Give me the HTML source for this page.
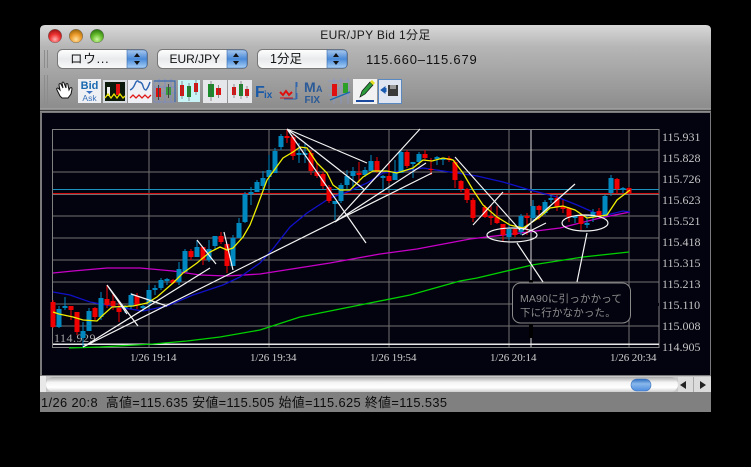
<!DOCTYPE html>
<html><head><meta charset="utf-8"><style>
html,body{margin:0;padding:0;background:#000;width:751px;height:467px;overflow:hidden}
svg{display:block}
text{font-family:"Liberation Sans","Noto Sans CJK JP",sans-serif}
.s{font-family:"Liberation Serif","Noto Serif CJK SC",serif;fill:#c4c4c4;font-size:12px}
.d{font-size:11px;letter-spacing:-.1px;fill:#cfcfcf}
</style></head><body>
<svg width="751" height="467" viewBox="0 0 751 467" xmlns="http://www.w3.org/2000/svg">
<defs>
<linearGradient id="win" x1="0" y1="0" x2="0" y2="1"><stop offset="0" stop-color="#d8d8d8"/><stop offset=".25" stop-color="#b6b6b6"/><stop offset="1" stop-color="#8a8a8a"/></linearGradient>
<linearGradient id="pop" x1="0" y1="0" x2="0" y2="1"><stop offset="0" stop-color="#fff"/><stop offset=".5" stop-color="#e8eaec"/><stop offset="1" stop-color="#fafafa"/></linearGradient>
<linearGradient id="step" x1="0" y1="0" x2="0" y2="1"><stop offset="0" stop-color="#a8c8ee"/><stop offset=".5" stop-color="#4a8ad8"/><stop offset="1" stop-color="#a8d0f6"/></linearGradient>
<linearGradient id="sb" x1="0" y1="0" x2="0" y2="1"><stop offset="0" stop-color="#a8a8a8"/><stop offset=".35" stop-color="#f4f4f4"/><stop offset=".7" stop-color="#fff"/><stop offset="1" stop-color="#cfcfcf"/></linearGradient>
<linearGradient id="th" x1="0" y1="0" x2="0" y2="1"><stop offset="0" stop-color="#2a6cc0"/><stop offset=".4" stop-color="#8ab8ea"/><stop offset="1" stop-color="#4c8ce0"/></linearGradient>
<radialGradient id="r" cx=".5" cy=".75" r=".7"><stop offset="0" stop-color="#ffb0b0"/><stop offset=".55" stop-color="#ee3030"/><stop offset="1" stop-color="#a01818"/></radialGradient>
<radialGradient id="o" cx=".5" cy=".75" r=".7"><stop offset="0" stop-color="#ffe0a0"/><stop offset=".55" stop-color="#ec9a28"/><stop offset="1" stop-color="#a06a10"/></radialGradient>
<radialGradient id="g" cx=".5" cy=".75" r=".7"><stop offset="0" stop-color="#ccf8a0"/><stop offset=".55" stop-color="#66bb2c"/><stop offset="1" stop-color="#2f7a12"/></radialGradient>
</defs>
<rect width="751" height="467" fill="#000"/>
<path d="M45 25H706Q711 25 711 30V112H40V30Q40 25 45 25Z" fill="url(#win)"/>
<rect x="40" y="108" width="671" height="1" fill="#9c9c9c"/>
<rect x="40" y="110" width="671" height="1" fill="#3c3c3c"/>
<circle cx="55" cy="36" r="6.8" fill="url(#r)" stroke="#6a6a6a" stroke-width=".5"/>
<circle cx="76" cy="36" r="6.8" fill="url(#o)" stroke="#6a6a6a" stroke-width=".5"/>
<circle cx="97" cy="36" r="6.8" fill="url(#g)" stroke="#6a6a6a" stroke-width=".5"/>
<text x="375.500" y="39" text-anchor="middle" font-size="12" fill="#1a1a1a" letter-spacing=".35">EUR/JPY Bid 1分足</text>
<path d="M44.500 50V68M47.500 50V68M44.500 75V105M47.500 75V105" stroke="#8c8c8c" stroke-width="1"/>

<rect x="57.500" y="49.500" width="90" height="19" rx="5" fill="url(#pop)" stroke="#777"/>
<path d="M127 50h16q4 0 4 4v10q0 4-4 4h-16z" fill="url(#step)" stroke="#3a6cb0" stroke-width=".6"/>
<path d="M137 53l-3 4h6zM137 65l-3-4h6z" fill="#111"/>
<text x="70" y="63" font-size="12.500" fill="#111" letter-spacing=".8">ロウ...</text>
<rect x="157.500" y="49.500" width="90" height="19" rx="5" fill="url(#pop)" stroke="#777"/>
<path d="M227 50h16q4 0 4 4v10q0 4-4 4h-16z" fill="url(#step)" stroke="#3a6cb0" stroke-width=".6"/>
<path d="M236 53l-3 4h6zM236 65l-3-4h6z" fill="#111"/>
<text x="169.500" y="63" font-size="12" fill="#111">EUR/JPY</text>
<rect x="257.500" y="49.500" width="90" height="19" rx="5" fill="url(#pop)" stroke="#777"/>
<path d="M327 50h16q4 0 4 4v10q0 4-4 4h-16z" fill="url(#step)" stroke="#3a6cb0" stroke-width=".6"/>
<path d="M336 53l-3 4h6zM336 65l-3-4h6z" fill="#111"/>
<text x="270" y="63" font-size="12.500" fill="#111">1分足</text>
<text x="366" y="64" font-size="13" fill="#111" letter-spacing=".82">115.660–115.679</text>

<!-- toolbar icons -->
<path d="M60 96l-3-6q-1-2 1-2l2 2-1-5q0-2 2-1l2 4-1-5q1-2 2 0l2 5 0-4q2-1 2 1l1 5 1-2q2-1 2 1l-1 5-3 4h-6z" fill="#fff" stroke="#111" stroke-width="1"/>
<rect x="78" y="79" width="23" height="24" fill="#eef0f4"/>
<text x="89.500" y="89" text-anchor="middle" font-size="11" font-weight="bold" fill="#1a6ab0">Bid</text>
<path d="M86 91h7l-3.500 3z" fill="#3a70c0"/>
<text x="89.500" y="101" text-anchor="middle" font-size="8.500" fill="#3a70b8">Ask</text>
<rect x="103" y="80" width="24" height="23" fill="#d8dce0"/>
<rect x="105" y="82" width="20" height="19" fill="#0c1a0c"/>
<rect x="107" y="87" width="3" height="9" fill="#eee"/><rect x="116" y="84" width="4" height="11" fill="#e01010"/>
<path d="M105 98l3-4 3 4 3-4 3 4 3-4 3 4 2-2" stroke="#e8e000" stroke-width="1.300" fill="none"/>
<rect x="128" y="80" width="24" height="23" fill="#eef0f6"/>
<path d="M130 90q3-1 5-6t4-2q3 0 4 4t3 4q2-2 4-8" stroke="#2a62b0" stroke-width="1.400" fill="none"/>
<path d="M130 98l3-3 3 3 3-3 3 3 3-3 3 3 3-3" stroke="#e01818" stroke-width="1.300" fill="none"/>
<path d="M154 81h21v21h-21zM159 79v24M165 79v24M171 79v24M154 87h21M154 93h21" fill="none" stroke="#7a8ac8" stroke-width=".8"/>
<path d="M154 81h21v21" fill="none" stroke="#3a6ab0" stroke-width="1.200"/>
<rect x="156" y="88" width="5" height="9" fill="#e01010"/><path d="M158.500 85v15" stroke="#444"/><rect x="166" y="87" width="5" height="8" fill="#3a9a3a"/><path d="M168.500 84v14" stroke="#444"/>
<rect x="178" y="80" width="22" height="22" fill="#c8f4f8"/>
<rect x="180" y="85" width="4" height="11" fill="#e01010"/><rect x="187" y="86" width="4" height="11" fill="#1a8a2a"/><rect x="194" y="83" width="4" height="9" fill="#e01010"/>
<path d="M182 81v18M189 83v18M196 80v15" stroke="#555" stroke-width=".6"/>
<rect x="203" y="80" width="24" height="23" fill="#e4e6ea"/>
<rect x="208" y="84" width="6" height="13" fill="#1a8a2a"/><rect x="216" y="88" width="5" height="7" fill="#e01010"/>
<path d="M211 81v20M218.500 85v13" stroke="#555" stroke-width=".6"/>
<rect x="228" y="80" width="24" height="23" fill="#e4e6ea"/>
<rect x="232" y="87" width="4" height="8" fill="#e01010"/><rect x="239" y="84" width="4" height="12" fill="#1a8a2a"/><rect x="245" y="89" width="4" height="7" fill="#e01010"/>
<path d="M234 84v14M241 81v18M247 86v12" stroke="#555" stroke-width=".6"/>
<text x="255" y="97" font-size="16" font-weight="bold" fill="#1a5aa8">F</text><text x="264" y="98" font-size="10" font-weight="bold" fill="#1a5aa8">ix</text>
<path d="M296 82v17h-12" stroke="#2a62a8" fill="none"/><path d="M280 92l3 3 3-4 3 4 3-3" stroke="#e01010" stroke-width="2" fill="none"/><path d="M280 98h13" stroke="#e01010"/><path d="M297 82v5M297 93v6" stroke="#3a6ab0"/>
<text x="304" y="92" font-size="14" font-weight="bold" fill="#2a5a98">M</text><text x="316" y="92" font-size="9" font-weight="bold" fill="#2a5a98">A</text><text x="304.500" y="103" font-size="10" font-weight="bold" fill="#2a5a98">FIX</text>
<path d="M328 81h22M328 88h22M328 95h22M334 78v26M341 78v26M348 78v26" stroke="#8a96c8" stroke-width=".8"/>
<rect x="332" y="84" width="5" height="12" fill="#e01010"/><rect x="343" y="83" width="5" height="10" fill="#2aa02a"/>
<path d="M330 100l20-8" stroke="#1a6ab0" stroke-width="1.400"/>
<rect x="353" y="79" width="24" height="25" fill="#f2f2f2"/>
<path d="M360 97l2-6 8-9 3 3-8 9z" fill="#2a9a3a" stroke="#111" stroke-width=".7"/><path d="M370 82l2-2 3 3-2 2z" fill="#e8e020"/>
<rect x="356" y="100" width="18" height="2" fill="#1a4aa0"/>
<rect x="378.500" y="79.500" width="23" height="24" fill="#dfe6f2" stroke="#5a88c0"/>
<rect x="388" y="85" width="10" height="11" fill="#3a3a3a"/><rect x="390" y="85" width="6" height="4" fill="#999"/>
<path d="M381 90l4-3v6zM386 88v4" fill="#1a5ab0" stroke="#1a5ab0"/>

<!-- chart panel -->
<rect x="40" y="112" width="671" height="264" fill="#7a7a7a"/>
<rect x="42" y="113" width="668" height="262" fill="#03030f"/>

<path d="M53 150H659M53 172H659M53 216H659M53 238H659M53 260H659M53 282H659M53 304H659M53 326H659M149 130V347M269 130V347M389 130V347M509 130V347M629 130V347" stroke="#707070" stroke-width="1" shape-rendering="crispEdges"/>
<rect x="52.500" y="129.500" width="606.500" height="218" fill="none" stroke="#808080" shape-rendering="crispEdges"/>
<rect x="53" y="193" width="606" height="2" fill="#707070"/>
<path d="M531 130V280M531 338V347" stroke="#d8d8d8" shape-rendering="crispEdges"/>
<rect x="53" y="189" width="606" height="1" fill="#1a94bc"/>
<rect x="53" y="193" width="606" height="1" fill="#d01010"/>
<rect x="53" y="343.500" width="606" height="1.500" fill="#e8e8e8"/>

<text class="s" x="54" y="342" style="fill:#a8a8a8" letter-spacing=".5">114.929</text>

<!-- moving averages -->
<polyline fill="none" stroke="#00d000" stroke-width="1.300" points="69,348 100,347 153,344 187,341 220,337 260,330 300,317 360,305 410,295 460,281 477,278 532,265 583,257 629,252"/>
<polyline fill="none" stroke="#c800c8" stroke-width="1.300" points="53,273 73,271 107,268 140,268 173,271 200,275 227,276 260,274 330,263 380,254 417,249 470,239 520,233 560,228 600,218 630,212"/>
<polyline fill="none" stroke="#1010c8" stroke-width="1.300" points="53,292 70,295 90,302 117,307 143,311 167,306 193,295 223,285 240,277 260,263 272,250 290,227 307,213 330,198 347,192 367,183 383,173 410,170 423,168 443,171 477,176 503,182 530,190 557,197 577,205 593,212 607,215 623,211 630,212"/>

<!-- candles -->
<path stroke="#0088c0" stroke-width="1" shape-rendering="crispEdges" fill="none" d="M59 306V328M65 297V310M83 322V347M89 308V331M101 292V320M125 305V313M131 293V309M143 305V311M149 285V308M155 285V295M161 278V290M167 278V285M179 262V285M185 249V272M197 240V257M209 240V262M215 236V250M233 235V266M239 218V238M245 192V223M251 187V205M257 180V192M263 171V190M269 155V185M275 148V173M281 134V150M299 143V163M305 143V163M335 201V220M341 183V203M347 170V189M353 167V188M365 167V177M371 155V171M383 175V192M395 160V180M401 150V173M413 162V178M419 152V165M437 156V165M443 158V165M509 225V240M521 214V235M533 200V222M545 200V215M551 195V203M575 216V223M587 216V228M593 209V222M605 195V217M611 175V196M623 187V193"/>
<path stroke="#0088c0" stroke-width="5" shape-rendering="crispEdges" fill="none" d="M59 309V327M65 306V308M83 331V338M89 311V331M101 298V317M125 306V308M131 295V306M143 306V308M149 290V303M155 288V290M161 280V288M167 279V281M179 269V282M185 251V272M197 247V257M209 249V260M215 236V246M233 238V266M239 223V238M245 194V222M251 192V194M257 182V192M263 178V186M269 170V177M275 151V173M281 136V147M299 153V155M305 153V155M335 201V204M341 185V201M347 176V185M353 171V176M365 170V175M371 161V171M383 176V178M395 172V180M401 152V173M413 162V164M419 154V162M437 157V159M443 158V160M509 229V237M521 216V232M533 206V218M545 202V213M551 198V200M575 216V218M587 223V225M593 212V217M605 196V215M611 178V193M623 188V190"/>
<path stroke="#f00000" stroke-width="1" shape-rendering="crispEdges" fill="none" d="M53 300V328M71 306V320M77 312V335M95 307V320M107 285V308M113 293V310M119 303V322M137 293V309M173 279V284M191 249V260M203 247V265M221 232V244M227 244V273M287 129V143M293 135V160M311 150V175M317 163V178M323 172V189M329 185V203M359 162V183M377 157V173M389 162V183M407 150V168M425 150V160M431 158V175M449 156V162M455 160V188M461 180V192M467 188V203M473 198V222M485 205V218M491 205V225M497 206V224M503 224V242M515 228V237M527 213V235M539 205V220M557 195V211M563 200V213M569 207V222M581 216V230M599 208V217M617 178V193M629 187V193"/>
<path stroke="#f00000" stroke-width="5" shape-rendering="crispEdges" fill="none" d="M53 302V327M71 306V310M77 312V332M95 308V317M107 299V305M113 301V306M119 308V312M137 296V305M173 280V283M191 251V257M203 247V260M221 236V242M227 244V266M287 136V138M293 137V156M311 153V171M317 172V176M323 174V186M329 187V201M359 173V175M377 161V171M389 176V181M407 152V166M425 154V158M431 169V170M449 158V160M455 162V180M461 181V189M467 189V200M473 200V218M485 207V217M491 216V218M497 217V223M503 224V235M515 229V235M527 216V218M539 206V210M557 198V207M563 206V209M569 208V217M581 216V224M599 211V216M617 179V189M629 188V193"/>

<polyline fill="none" stroke="#f0f000" stroke-width="1.300" points="53,312 59,314 73,317 83,320 97,321 103,315 112,307 133,306 147,303 157,297 173,283 183,273 197,263 210,252 220,247 227,250 233,248 243,237 250,225 257,207 267,180 283,158 293,152 300,147 307,148 317,163 327,173 333,185 340,190 350,190 363,177 373,171 387,171 397,173 413,168 423,160 432,161 443,158 453,160 463,173 473,190 483,205 497,217 510,225 523,228 540,217 550,208 563,206 575,210 587,218 607,215 617,200 630,190"/>

<!-- hand-drawn white lines -->
<path fill="none" stroke="#f4f4f4" stroke-width="1.200" d="M83 347L210 268M83 347L432 173M335 222L420 129M335 222L426 163M287 129L367 163M287 129L366 243M287 129L365 190M107 285L138 326M107 285L127 314M131 294L167 306M197 240L216 264M224 232L233 270M455 157L520 230M473 225L503 192M523 230L575 184M522 235L546 223M517 243L543 282M587 233L577 282"/>
<ellipse cx="512" cy="235" rx="25" ry="7" fill="none" stroke="#f4f4f4" stroke-width="1.200"/>
<ellipse cx="585" cy="223" rx="23" ry="8" fill="none" stroke="#f4f4f4" stroke-width="1.200"/>

<!-- callout -->
<rect x="610" y="303" width="49" height="3" fill="#03030f"/>
<rect x="529" y="280" width="4" height="58" fill="#000"/>
<rect x="512.500" y="283" width="118" height="40" rx="8" fill="#03030f" stroke="#8a8a8a"/>
<text x="520" y="302" font-size="10.500" fill="#8e8e8e" letter-spacing=".15">MA90に引っかかって</text>
<text x="520" y="316" font-size="10.500" fill="#8e8e8e" letter-spacing=".15">下に行かなかった。</text>

<!-- axis labels -->
<g>
<text class="s" x="662" y="141">115.931</text>
<text class="s" x="662" y="162">115.828</text>
<text class="s" x="662" y="183">115.726</text>
<text class="s" x="662" y="204">115.623</text>
<text class="s" x="662" y="225">115.521</text>
<text class="s" x="662" y="246">115.418</text>
<text class="s" x="662" y="267">115.315</text>
<text class="s" x="662" y="288">115.213</text>
<text class="s" x="662" y="309">115.110</text>
<text class="s" x="662" y="330">115.008</text>
<text class="s" x="662" y="351">114.905</text>
<text class="s d" x="130" y="361">1/26 19:14</text>
<text class="s d" x="250" y="361">1/26 19:34</text>
<text class="s d" x="370" y="361">1/26 19:54</text>
<text class="s d" x="490" y="361">1/26 20:14</text>
<text class="s d" x="610" y="361">1/26 20:34</text>
</g>

<!-- scrollbar -->
<rect x="40" y="376" width="671" height="16" fill="#c8c8c8"/>
<rect x="40" y="376" width="6" height="16" fill="#e8e8e8"/>
<rect x="46" y="377" width="632" height="15" rx="7.500" fill="url(#sb)"/>
<rect x="631" y="379" width="20" height="12" rx="6" fill="url(#th)" stroke="#3a70b8" stroke-width=".6"/>
<rect x="678" y="377" width="33" height="15" fill="#dcdcdc"/>
<rect x="693" y="377" width="1" height="15" fill="#aaa"/>
<path d="M680 385l6-4v8zM706 385l-6-4v8z" fill="#222"/>

<!-- status bar -->
<rect x="40" y="392" width="671" height="20" fill="#808080"/>
<text x="41" y="407" font-size="12.800" fill="#0c0c0c" style="white-space:pre" textLength="406" lengthAdjust="spacing">1/26 20:8  高値=115.635 安値=115.505 始値=115.625 終値=115.535</text>
</svg>
</body></html>
